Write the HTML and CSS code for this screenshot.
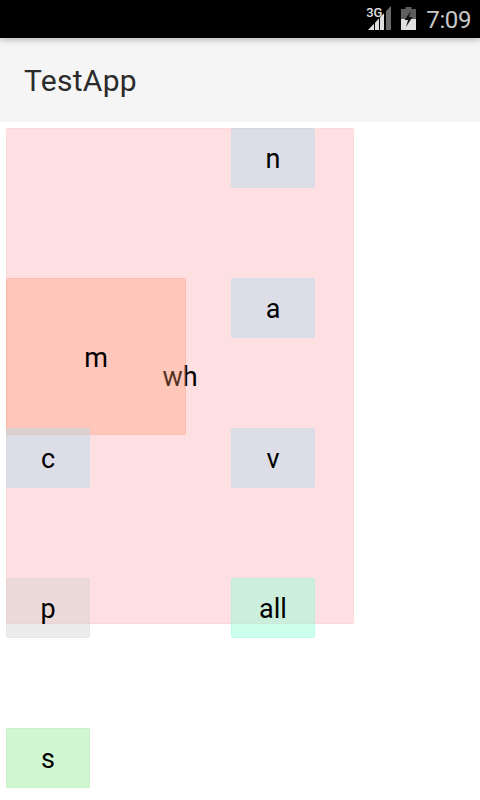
FILE: index.html
```html
<!DOCTYPE html>
<html lang="en">

<head>
    <meta charset="UTF-8">
    <meta name="viewport" content="width=device-width, initial-scale=1.0">
    <title>TestApp</title>
    <link rel="stylesheet" href="styles.css">
</head>

<body>

    <!-- Status bar -->
    <div class="status-bar">
        <div class="signal">
            <span class="network">3G</span>
            <svg width="23" height="24" viewBox="0 0 23 24">
                <path d="M0 24 L6 17.7 V24 Z" fill="#e0e0e0"/>
                <path d="M7 16.7 L11 12.5 V24 H7 Z" fill="#e0e0e0"/>
                <path d="M12 11.5 L16 7.3 V24 H12 Z" fill="#e0e0e0"/>
                <path d="M18 5.2 L23 0 V24 H18 Z" fill="#6a6a6a"/>
            </svg>
        </div>
        <svg class="battery" width="15" height="23" viewBox="0 0 15 23">
            <path d="M4.5 0 H10.5 V2 H15 V23 H0 V2 H4.5 Z" fill="#5e5e5e"/>
            <path d="M0 12 H15 V23 H0 Z" fill="#e0e0e0"/>
            <path d="M10 4 L3.5 13 H7 L5 20 L11.5 10 H8 Z" fill="#111"/>
        </svg>
        <span class="clock">7:09</span>
    </div>

    <!-- App bar -->
    <header class="app-bar">TestApp</header>

    <div class="canvas">
        <div class="panel">wh</div>
        <div class="box box-m">m</div>

        <div class="button-grid">
            <div class="box box-n col-2">n</div>
            <div class="box box-n col-2">a</div>
            <div class="box box-n">c</div>
            <div class="box box-n">v</div>
            <div class="box box-p">p</div>
            <div class="box box-all">all</div>
            <div class="box box-s">s</div>
        </div>
    </div>

</body>

</html>
```

FILE: styles.css
```css
* {
    margin: 0;
    padding: 0;
    box-sizing: border-box;
}

body {
    width: 480px;
    height: 800px;
    overflow: hidden;
    background-color: #fff;
    color: #000;
    font-family: 'Roboto', sans-serif;
}

/* Status bar */
.status-bar {
    position: relative;
    z-index: 1;
    height: 38px;
    padding: 6px 9px 0 0;
    display: flex;
    justify-content: flex-end;
    align-items: flex-start;
    background-color: #000;
    box-shadow: 0 2px 6px rgba(0, 0, 0, 0.25);
}

.signal {
    position: relative;
    width: 23px;
    height: 24px;
    margin-right: 10px;
}

.signal svg {
    display: block;
}

.network {
    position: absolute;
    top: 0;
    left: -2px;
    color: #e0e0e0;
    font-size: 13px;
    font-weight: 500;
    line-height: 14px;
    letter-spacing: -0.3px;
}

.battery {
    margin-top: 1px;
    margin-right: 10px;
}

.clock {
    color: #c8c8c8;
    font-size: 24px;
    line-height: 28px;
    letter-spacing: -0.4px;
}

/* App bar */
.app-bar {
    height: 84px;
    padding-left: 24px;
    display: flex;
    align-items: center;
    background-color: #f5f5f5;
    color: #2b2b2b;
    font-size: 30px;
    letter-spacing: 0.3px;
}

/* Boxes */
.canvas {
    position: relative;
    height: 678px;
    padding: 6px;
}

.panel {
    position: absolute;
    top: 6px;
    left: 6px;
    width: 348px;
    height: 496px;
    padding-top: 2px;
    display: flex;
    justify-content: center;
    align-items: center;
    background-color: rgba(255, 0, 20, 0.12);
    border: 1px solid rgba(255, 0, 20, 0.04);
    border-radius: 2px;
    font-size: 27px;
}

.button-grid {
    position: relative;
    display: grid;
    grid-template-columns: 84px 84px;
    grid-auto-rows: 60px;
    column-gap: 141px;
    row-gap: 90px;
}

.col-2 {
    grid-column: 2;
}

.box {
    padding-top: 2px;
    display: flex;
    justify-content: center;
    align-items: center;
    border: 1px solid transparent;
    border-radius: 2px;
    font-size: 27px;
}

.box-m {
    position: absolute;
    top: 156px;
    left: 6px;
    width: 180px;
    height: 157px;
    background-color: rgba(255, 146, 106, 0.33);
    border-color: rgba(255, 120, 90, 0.12);
}

.box-n {
    background-color: rgba(177, 217, 234, 0.45);
    border-color: rgba(150, 200, 220, 0.06);
}

.box-p {
    background-color: rgba(207, 207, 207, 0.4);
    border-color: rgba(150, 150, 150, 0.06);
}

.box-all {
    background-color: rgba(141, 255, 213, 0.45);
    border-color: rgba(100, 240, 190, 0.15);
}

.box-s {
    background-color: rgba(180, 240, 180, 0.6);
    border-color: rgba(130, 230, 130, 0.15);
}
```
